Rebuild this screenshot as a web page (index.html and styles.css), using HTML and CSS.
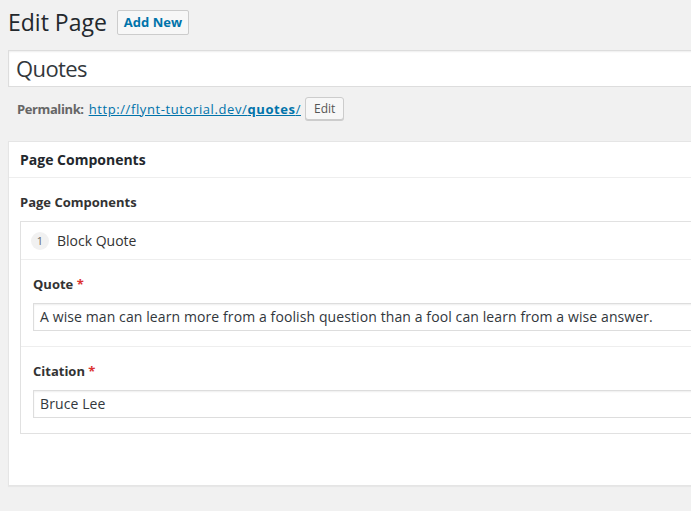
FILE: index.html
```html
<!DOCTYPE html>
<html>
<head>
<meta charset="utf-8">
<link rel="stylesheet" href="styles.css">
</head>
<body>
<div class="wrap">
  <div class="heading">
    <h1 class="page-title">Edit Page</h1>
    <a class="btn-add" href="#">Add New</a>
  </div>
  <div class="title-input">Quotes</div>
  <div class="permalink">
    <strong class="perm-label">Permalink:</strong>
    <a class="perm-link" href="#">http://flynt-tutorial.dev/<b>quotes</b>/</a>
    <span class="btn-edit">Edit</span>
  </div>
  <div class="postbox">
    <h2 class="postbox-title">Page Components</h2>
    <div class="inside">
      <div class="field-label">Page Components</div>
      <div class="repeater">
        <div class="layout-head"><span class="badge">1</span><span>Block Quote</span></div>
        <div class="field">
          <div class="field-label">Quote <span class="req">*</span></div>
          <div class="text-input">A wise man can learn more from a foolish question than a fool can learn from a wise answer.</div>
        </div>
        <div class="field field-last">
          <div class="field-label">Citation <span class="req">*</span></div>
          <div class="text-input">Bruce Lee</div>
        </div>
      </div>
    </div>
  </div>
</div>
</body>
</html>
```

FILE: styles.css
```css
html, body {
  margin: 0;
  padding: 0;
  background: #f1f1f1;
  overflow: hidden;
  height: 100%;
}
body {
  font-family: "Open Sans", sans-serif;
  color: #32373c;
}
.wrap {
  width: 760px;
  padding-left: 8px;
}
.heading {
  display: flex;
  align-items: center;
  gap: 10px;
  height: 27px;
  padding-top: 9px;
  margin-bottom: 14px;
}
.page-title {
  margin: 0;
  font-size: 23px;
  font-weight: 400;
  color: #23282d;
  line-height: 27px;
}
.btn-add {
  display: inline-block;
  box-sizing: border-box;
  height: 25px;
  line-height: 23px;
  padding: 0 6px;
  border: 1px solid #ccc;
  border-radius: 2px;
  background: #f7f7f7;
  color: #0073aa;
  font-size: 13px;
  font-weight: 700;
  text-decoration: none;
}
.title-input {
  box-sizing: border-box;
  height: 37px;
  border: 1px solid #ddd;
  background: #fff;
  padding: 0 7px;
  font-size: 22px;
  letter-spacing: -0.6px;
  line-height: 35px;
  color: #32373c;
  box-shadow: inset 0 1px 2px rgba(0,0,0,.07);
}
.permalink {
  display: flex;
  align-items: center;
  height: 23px;
  margin-top: 10px;
  padding-left: 9px;
  font-size: 13px;
  color: #666;
}
.perm-label {
  font-weight: 700;
  letter-spacing: -0.4px;
  margin-right: 5px;
}
.perm-link {
  color: #0073aa;
  text-decoration: underline;
  letter-spacing: 0.6px;
  margin-right: 4px;
}
.btn-edit {
  box-sizing: border-box;
  height: 23px;
  line-height: 21px;
  padding: 0 8px;
  border: 1px solid #ccc;
  border-radius: 3px;
  background: #f7f7f7;
  color: #555;
  font-size: 12px;
  box-shadow: 0 1px 0 #ccc;
}
.postbox {
  margin-top: 21px;
  background: #fff;
  border: 1px solid #e5e5e5;
  box-shadow: 0 1px 1px rgba(0,0,0,.04);
}
.postbox-title {
  margin: 0;
  height: 35px;
  line-height: 36px;
  padding: 0 11px;
  font-size: 14px;
  font-weight: 700;
  color: #23282d;
  border-bottom: 1px solid #eee;
}
.inside {
  padding: 16px 0 51px 11px;
}
.field-label {
  font-size: 13px;
  font-weight: 700;
  color: #333;
  line-height: 16px;
  height: 16px;
}
.req {
  color: #dc3232;
}
.inside > .field-label {
  margin-bottom: 11px;
}
.repeater {
  border: 1px solid #e1e1e1;
}
.layout-head {
  display: flex;
  align-items: center;
  gap: 8px;
  height: 37px;
  padding-left: 10px;
  font-size: 14px;
  color: #333;
  border-bottom: 1px solid #eee;
}
.badge {
  width: 18px;
  height: 18px;
  border-radius: 50%;
  background: #f1f1f1;
  color: #666;
  font-size: 11px;
  line-height: 18px;
  text-align: center;
}
.field {
  padding: 16px 0 15px 12px;
  border-bottom: 1px solid #eee;
}
.field-last {
  border-bottom: 0;
}
.field .field-label {
  margin-bottom: 11px;
}
.text-input {
  box-sizing: border-box;
  height: 28px;
  border: 1px solid #ddd;
  background: #fff;
  padding: 0 6px;
  font-size: 14px;
  letter-spacing: 0.1px;
  line-height: 26px;
  color: #32373c;
  white-space: nowrap;
  box-shadow: inset 0 1px 2px rgba(0,0,0,.07);
}
```
